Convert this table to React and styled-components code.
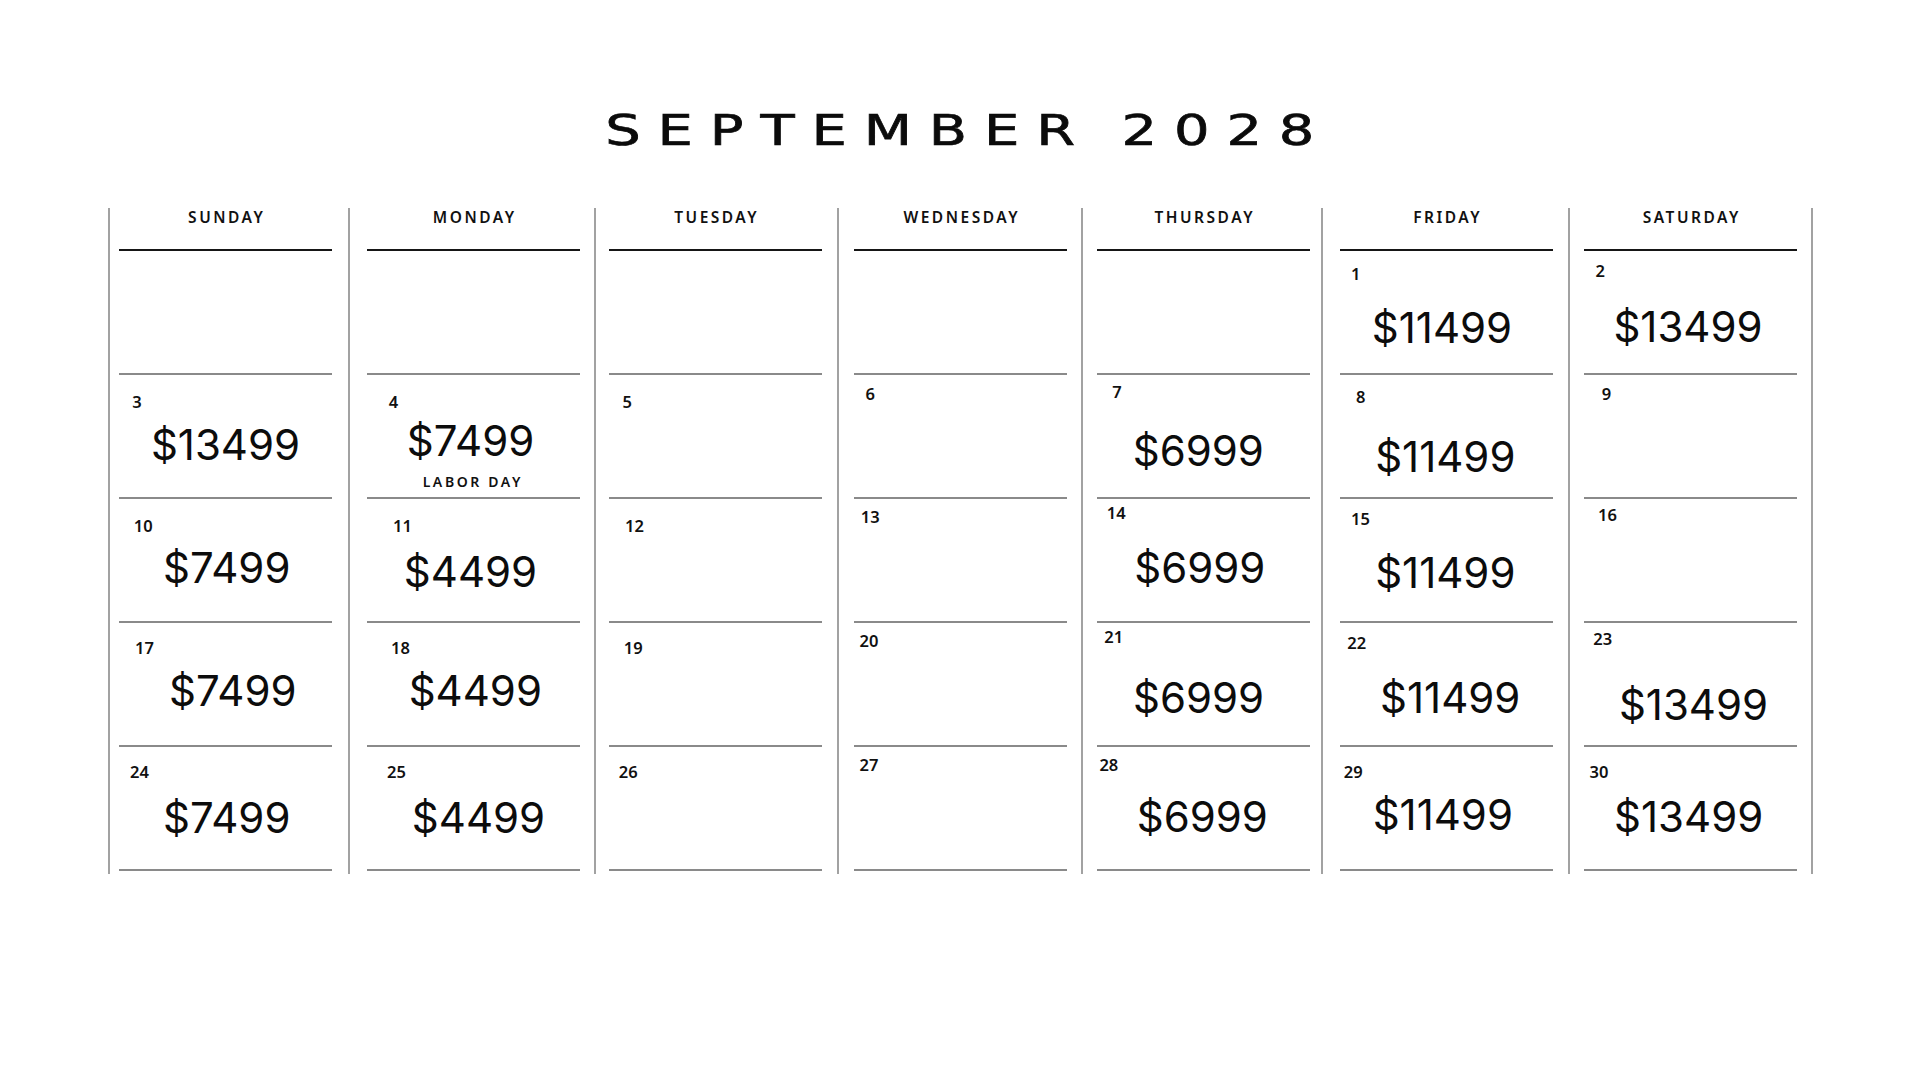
import React from "react";
import styled, { createGlobalStyle } from "styled-components";

const GlobalStyle = createGlobalStyle`
  html, body { margin: 0; padding: 0; background: #ffffff; }
  body { width: 1920px; height: 1080px; overflow: hidden; }
  * { box-sizing: border-box; }
`;

const Page = styled.div`
  width: 1920px;
  height: 1080px;
  background: #ffffff;
  display: flex;
  flex-direction: column;
  padding-top: 105px;
`;

const TitleRow = styled.div`
  display: flex;
  justify-content: center;
  padding-left: 0px;
`;

const Title = styled.h1`
  margin: 0;
  font-family: "DejaVu Sans", sans-serif;
  font-weight: 400;
  font-size: 43px;
  line-height: 50px;
  color: #0b0b0b;
  letter-spacing: 13px;
  word-spacing: -4px;
  padding-left: 13px;
  transform: scaleX(1.3);
  transform-origin: center;
  white-space: nowrap;
  -webkit-text-stroke: 0.7px #0b0b0b;
`;

const Board = styled.div`
  margin-top: 53px;
  margin-left: 108px;
  width: max-content;
  display: grid;
  grid-template-columns: 240px 246px 243px 244px 240px 247px 243px;
  border-right: 2px solid #a2a2a2;
`;

const Column = styled.div`
  display: flex;
  flex-direction: column;
  border-left: 2px solid #a2a2a2;
  padding-left: ${(p) => p.$inset}px;
  padding-bottom: 3px;
`;

const DayName = styled.div`
  width: 213px;
  height: 43px;
  border-bottom: 2px solid #161616;
  font-family: "Noto Sans", sans-serif;
  font-weight: 600;
  font-size: 15.5px;
  line-height: 19px;
  letter-spacing: 2.5px;
  padding-left: 2.5px;
  text-align: center;
  color: #111;
`;

const Cell = styled.div`
  width: 213px;
  height: 124px;
  border-bottom: 2px solid #8a8a8a;
  display: flex;
  flex-direction: column;
`;

const DayNum = styled.div`
  margin-top: ${(p) => p.$y}px;
  margin-left: ${(p) => p.$x}px;
  font-family: "Noto Sans", sans-serif;
  font-weight: 600;
  font-size: 16.5px;
  line-height: 18px;
  color: #111;
`;

const Price = styled.div`
  margin-top: ${(p) => p.$y}px;
  transform: translateX(${(p) => p.$x}px);
  font-family: "Inter", sans-serif;
  font-weight: 400;
  font-size: 42px;
  line-height: 48px;
  text-align: center;
  color: #0c0c0c;
`;

const Note = styled.div`
  margin-top: ${(p) => p.$y}px;
  transform: translateX(${(p) => p.$x}px);
  font-family: "Noto Sans", sans-serif;
  font-weight: 600;
  font-size: 14px;
  line-height: 16px;
  letter-spacing: 2.6px;
  padding-left: 2.6px;
  text-align: center;
  color: #111;
`;

const columns = [
  { name: "SUNDAY", inset: 9 },
  { name: "MONDAY", inset: 17 },
  { name: "TUESDAY", inset: 13 },
  { name: "WEDNESDAY", inset: 15 },
  { name: "THURSDAY", inset: 14 },
  { name: "FRIDAY", inset: 17 },
  { name: "SATURDAY", inset: 14 },
];

// weeks[row][weekday]
const weeks = [
  [
    null, null, null, null, null,
    { d: 1, nx: 11, ny: 24, p: "$11499", dx: -4.5, py: 77.5 },
    { d: 2, nx: 11.5, ny: 20.5, p: "$13499", dx: -2.5, py: 77 },
  ],
  [
    { d: 3, nx: 13.3, ny: 28, p: "$13499", dx: 0, py: 71 },
    { d: 4, nx: 21.7, ny: 28, p: "$7499", dx: -3, py: 67, note: "LABOR DAY", ndx: -2, ny2: 108 },
    { d: 5, nx: 13.5, ny: 28 },
    { d: 6, nx: 11.6, ny: 20 },
    { d: 7, nx: 15.3, ny: 17.5, p: "$6999", dx: -5.2, py: 76.5 },
    { d: 8, nx: 16, ny: 23, p: "$11499", dx: -1.2, py: 83 },
    { d: 9, nx: 17.8, ny: 20 },
  ],
  [
    { d: 10, nx: 14.7, ny: 28, p: "$7499", dx: 1.2, py: 70 },
    { d: 11, nx: 26, ny: 28, p: "$4499", dx: -3, py: 73.5 },
    { d: 12, nx: 16, ny: 28 },
    { d: 13, nx: 6.7, ny: 18.5 },
    { d: 14, nx: 9.8, ny: 15, p: "$6999", dx: -3.7, py: 70 },
    { d: 15, nx: 11, ny: 21, p: "$11499", dx: -1.2, py: 75 },
    { d: 16, nx: 14, ny: 17 },
  ],
  [
    { d: 17, nx: 16, ny: 26, p: "$7499", dx: 7.3, py: 68.6 },
    { d: 18, nx: 24, ny: 26, p: "$4499", dx: 1.8, py: 68.6 },
    { d: 19, nx: 14.7, ny: 26 },
    { d: 20, nx: 5.5, ny: 18.5 },
    { d: 21, nx: 7.3, ny: 15, p: "$6999", dx: -4.9, py: 76 },
    { d: 22, nx: 7.3, ny: 21, p: "$11499", dx: 3.7, py: 76 },
    { d: 23, nx: 9.2, ny: 17, p: "$13499", dx: 3, py: 83 },
  ],
  [
    { d: 24, nx: 11, ny: 26, p: "$7499", dx: 1.2, py: 71.5 },
    { d: 25, nx: 20, ny: 26, p: "$4499", dx: 5, py: 71.5 },
    { d: 26, nx: 9.8, ny: 26 },
    { d: 27, nx: 5.5, ny: 18.5 },
    { d: 28, nx: 2.4, ny: 18.5, p: "$6999", dx: -1.2, py: 71 },
    { d: 29, nx: 3.7, ny: 26, p: "$11499", dx: -3.7, py: 68.6 },
    { d: 30, nx: 5.5, ny: 26, p: "$13499", dx: -1.8, py: 71 },
  ],
];

function DayCell({ day }) {
  if (!day) return <Cell />;
  const numTop = day.ny - 10;
  const priceTop = day.p ? day.py - 1 - 24 - (numTop + 18) : 0;
  const noteTop = day.note ? day.ny2 - 1 - 8 - (day.py - 1 + 24) : 0;
  return (
    <Cell>
      <DayNum $x={day.nx} $y={numTop}>{day.d}</DayNum>
      {day.p && (
        <Price $x={day.dx} $y={priceTop}>
          {day.p}
        </Price>
      )}
      {day.note && (
        <Note $x={day.ndx} $y={noteTop}>
          {day.note}
        </Note>
      )}
    </Cell>
  );
}

export default function App() {
  return (
    <Page>
      <GlobalStyle />
      <TitleRow>
        <Title>SEPTEMBER 2028</Title>
      </TitleRow>
      <Board>
        {columns.map((col, ci) => (
          <Column key={col.name} $inset={col.inset}>
            <DayName>{col.name}</DayName>
            {weeks.map((week, wi) => (
              <DayCell key={wi} day={week[ci]} />
            ))}
          </Column>
        ))}
      </Board>
    </Page>
  );
}
